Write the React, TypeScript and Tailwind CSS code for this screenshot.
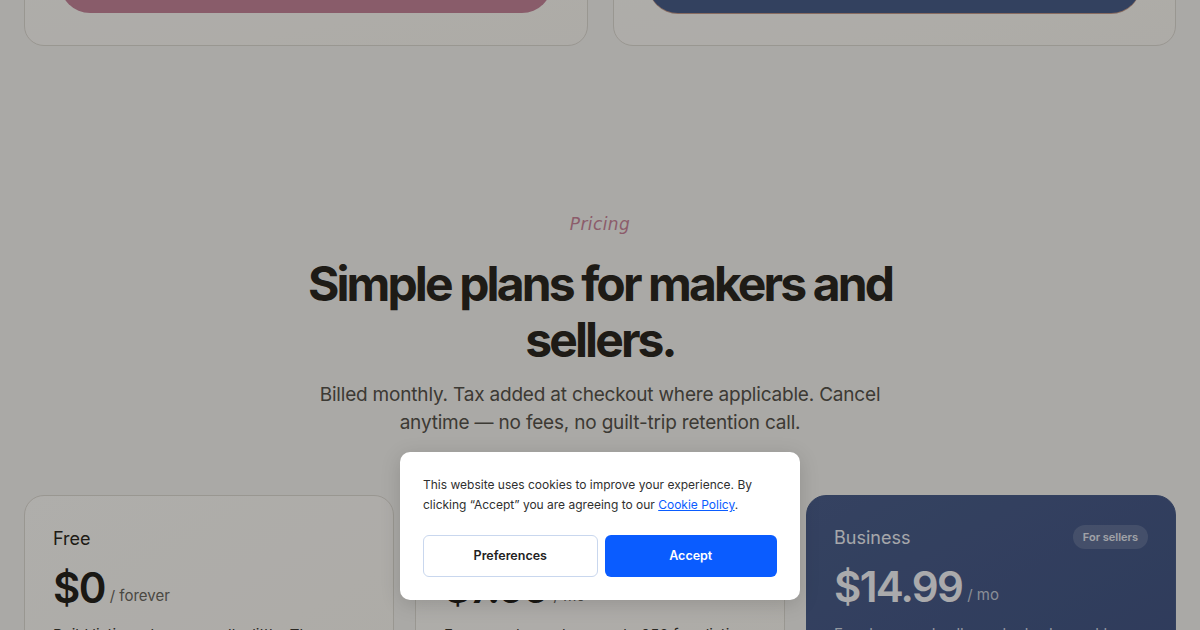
import React from "react";

const font = { fontFamily: "Inter, 'Liberation Sans', sans-serif" };

interface Plan {
  name: string;
  price: string;
  unit: string;
  blurb: string;
  badge?: string;
  dark?: boolean;
}

const plans: Plan[] = [
  {
    name: "Free",
    price: "$0",
    unit: "/ forever",
    blurb: "Build listings, browse, sell a little. The essentials, no card needed.",
  },
  {
    name: "Maker",
    price: "$7.99",
    unit: "/ mo",
    blurb: "For everyday makers: up to 250 free listings and lower fees.",
  },
  {
    name: "Business",
    price: "$14.99",
    unit: "/ mo",
    blurb: "For stores and sellers who trade weekly. Commercial tools included.",
    badge: "For sellers",
    dark: true,
  },
];

export default function App() {
  return (
    <div className="relative h-[630px] w-[1200px] overflow-hidden bg-[#f4f2ee]" style={font}>
      {/* previous section, scrolled mostly out of view */}
      <div className="-mt-[60px] grid grid-cols-2 gap-[25px] px-[24px]">
        <div className="h-[106px] rounded-[20px] border border-[#dcd8d0] bg-gradient-to-br from-[#fbf9f5] to-[#f8f5ef] px-[35px] pb-[32px]">
          <div className="h-full rounded-b-[30px] bg-[#c58599]" />
        </div>
        <div className="h-[106px] rounded-[20px] border border-[#dcd8d0] bg-gradient-to-br from-[#fbf9f5] to-[#f8f5ef] px-[34px] pb-[32px]">
          <div className="h-full rounded-b-[30px] bg-[#495d88] shadow-[0_1px_0_#c29a8a]" />
        </div>
      </div>

      {/* pricing section */}
      <section className="flex flex-col items-center pt-[166px] text-center">
        <p
          className="italic leading-[24px] tracking-wide text-[#c98599]"
          style={{ fontFamily: "'DejaVu Sans', sans-serif", fontSize: 17 }}
        >
          Pricing
        </p>
        <h2 className="mt-[20px] max-w-[640px] text-[48px] font-bold leading-[56px] tracking-[-0.06em] text-[#2b2820]">
          Simple plans for makers and sellers.
        </h2>
        <p className="mt-[13px] max-w-[580px] text-[19px] leading-[28px] tracking-[-0.01em] text-[#57534b]">
          Billed monthly. Tax added at checkout where applicable. Cancel anytime — no fees, no guilt-trip retention call.
        </p>
      </section>

      <div className="mt-[58px] grid grid-cols-3 gap-[21px] px-[24px]">
        {plans.map((p) => (
          <div
            key={p.name}
            className={
              p.dark
                ? "h-[200px] rounded-[20px] border border-[#4a5d89] bg-gradient-to-br from-[#4c5f8b] to-[#435583] px-[27px] pt-[29px]"
                : "h-[200px] rounded-[20px] border border-[#dcd8d0] bg-gradient-to-br from-[#fbf9f5] to-[#f8f5ef] px-[28px] pt-[30px]"
            }
          >
            <div className="flex h-[24px] items-center justify-between">
              <span className={p.dark ? "text-[18px] text-[#eef0f5]" : "text-[18px] text-[#2b2820]"}>{p.name}</span>
              {p.badge && (
                <span className="rounded-full bg-white/15 px-[10px] py-[4px] text-[11px] font-semibold text-[#e6e9f0]">
                  {p.badge}
                </span>
              )}
            </div>
            <div className="mt-[17px] flex items-end gap-[5px]">
              <span
                className={
                  p.dark
                    ? "text-[42px] font-semibold leading-none tracking-[-0.04em] text-[#f4f4f6]"
                    : "text-[42px] font-semibold leading-none tracking-[-0.04em] text-[#26231c]"
                }
              >
                {p.price}
              </span>
              <span
                className={
                  p.dark
                    ? "pb-[6px] text-[15px] leading-none text-[#c5cbd8]"
                    : "pb-[6px] text-[15px] leading-none text-[#6b675f]"
                }
              >
                {p.unit}
              </span>
            </div>
            <p className={p.dark ? "mt-[15px] text-[15px] leading-[22px] text-[#d5dae4]" : "mt-[15px] text-[15px] leading-[22px] text-[#3b3830]"}>
              {p.blurb}
            </p>
          </div>
        ))}
      </div>

      {/* dim overlay */}
      <div className="absolute inset-0 bg-black/30" />

      {/* cookie notice */}
      <div className="absolute bottom-[30px] left-1/2 w-[400px] -translate-x-1/2 rounded-[10px] bg-white px-[23px] pb-[23px] pt-[23px] shadow-[0_4px_20px_rgba(0,0,0,0.15)]">
        <p className="text-[12px] leading-[20px] text-[#2f2f2f]">
          This website uses cookies to improve your experience. By clicking “Accept” you are agreeing to our{" "}
          <a className="text-[#0a5cff] underline">Cookie Policy</a>.
        </p>
        <div className="mt-[20px] flex gap-[7px]">
          <button className="h-[42px] flex-1 rounded-[6px] border border-[#c9d7ee] bg-white text-[12.5px] font-semibold text-[#222]">
            Preferences
          </button>
          <button className="h-[42px] flex-1 rounded-[6px] bg-[#0a5cff] text-[12.5px] font-semibold text-white">
            Accept
          </button>
        </div>
      </div>
    </div>
  );
}
